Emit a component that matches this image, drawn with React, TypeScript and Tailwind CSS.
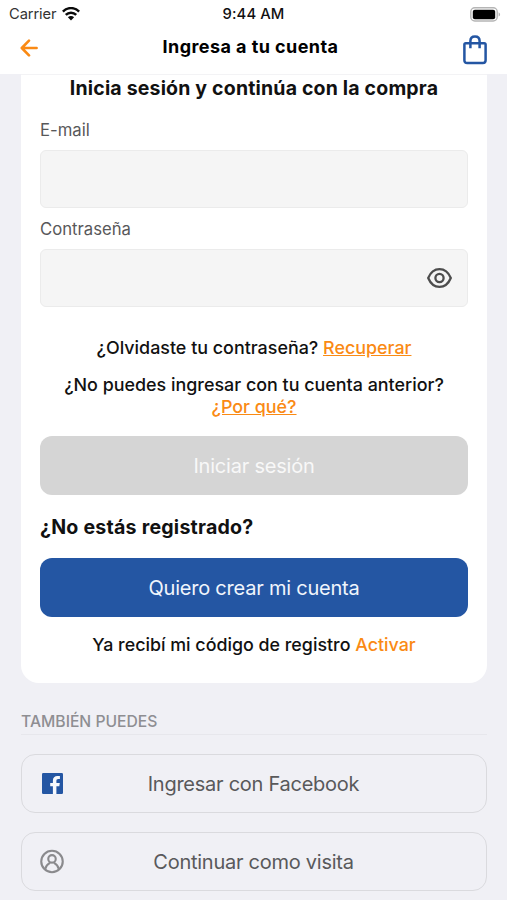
import React, { useState } from 'react';

const WifiIcon = () => (
  <svg className="h-[14px] w-[18px]" viewBox="0 0 18 14" fill="none" stroke="#0a0a0a" strokeWidth="2.5">
    <path d="M0.9 4.7C5.4 -0.1 12.6 -0.1 17.1 4.7" />
    <path d="M3.8 7.9C6.7 4.9 11.3 4.9 14.2 7.9" />
    <path d="M9 13.6L5.9 10.3C7.6 8.7 10.4 8.7 12.1 10.3Z" fill="#0a0a0a" stroke="none" />
  </svg>
);

const BatteryIcon = () => (
  <svg className="h-[15px] w-[31px]" viewBox="0 0 31 15">
    <rect x="0.8" y="0.8" width="26.4" height="13.2" rx="4" fill="#fff" stroke="#b5b5b5" strokeWidth="1.4" />
    <rect x="2.8" y="2.8" width="22.4" height="9.4" rx="2" fill="#000" />
    <path d="M28.6 5.2C30.6 6 30.6 8.8 28.6 9.6Z" fill="#b5b5b5" />
  </svg>
);

const BackIcon = () => (
  <svg className="h-[18px] w-[18px]" viewBox="0 0 18 18" fill="none" stroke="#fa8a14" strokeWidth="2.6">
    <path d="M9 1.6L1.8 9L9 16.4M2 9H16.6" strokeLinecap="round" strokeLinejoin="round" />
  </svg>
);

const BagIcon = () => (
  <svg className="h-[30px] w-[24px]" viewBox="0 0 24 30" fill="none" stroke="#2456a3" strokeWidth="2.5">
    <path d="M2.8 8.2H21.2C22.1 8.2 22.6 8.7 22.6 9.6V25.2C22.6 27 21.6 28 19.8 28H4.2C2.4 28 1.4 27 1.4 25.2V9.6C1.4 8.7 1.9 8.2 2.8 8.2Z" />
    <path d="M7.4 13.2V6.1C7.4 3.3 9.3 1.5 12 1.5C14.7 1.5 16.6 3.3 16.6 6.1V13.2" />
  </svg>
);

const EyeIcon = () => (
  <svg className="h-[20px] w-[25px]" viewBox="0 0 25 20" fill="none" stroke="#4d4d4d" strokeWidth="2.3">
    <path d="M1.2 10C6.1 -1.8 18.9 -1.8 23.8 10C18.9 21.8 6.1 21.8 1.2 10Z" strokeLinejoin="round" />
    <circle cx="12.5" cy="10" r="4.1" />
  </svg>
);

const FacebookIcon = () => (
  <svg className="h-[21px] w-[21px]" viewBox="0 0 21 21">
    <rect width="21" height="21" rx="1.2" fill="#2456a3" />
    <path
      d="M10.9 21V13.2H8.2V9.9H10.9V7.6C10.9 4.6 12.7 3 15.4 3H17.9V6.1H16.3C14.9 6.1 14.4 6.8 14.4 8V9.9H17.8L17.3 13.2H14.4V21Z"
      fill="#f7f9fc"
    />
  </svg>
);

const UserIcon = () => (
  <svg className="h-[25px] w-[25px]" viewBox="0 0 25 25" fill="none" stroke="#8a8a8d" strokeWidth="2.2">
    <circle cx="12.5" cy="12.5" r="11.2" />
    <circle cx="12.5" cy="9.8" r="3.9" />
    <path d="M5.4 20.3C6.2 16.8 8.2 15 10.6 13.6M14.4 13.6C16.8 15 18.8 16.8 19.6 20.3" />
  </svg>
);

interface OptionProps {
  icon: React.ReactNode;
  label: string;
}

const Option = ({ icon, label }: OptionProps) => (
  <button className="grid h-[59px] w-full grid-cols-[24px_1fr_24px] items-center rounded-[14px] border-[1.5px] border-[#dadade] px-[18px] text-[#59595b]">
    <span className="flex justify-center">{icon}</span>
    <span className="pr-px text-center text-[20px] tracking-[-0.26px]">{label}</span>
  </button>
);

const App = () => {
  const [email, setEmail] = useState('');
  const [password, setPassword] = useState('');
  const [visible, setVisible] = useState(false);

  return (
    <div className="h-[900px] w-full overflow-hidden bg-[#f0f0f5] font-['Inter','Liberation_Sans',sans-serif] text-[#111]">
      <header className="h-[74px] bg-white">
        {/* Status bar */}
        <div className="grid h-[28px] grid-cols-3 items-center px-[6px]">
          <div className="flex items-center gap-[6px] pl-[3px] text-[#333]">
            <span className="text-[14.7px] tracking-[-0.1px]">Carrier</span>
            <WifiIcon />
          </div>
          <span className="text-center text-[14.8px] font-medium tracking-[0.1px]">9:44 AM</span>
          <div className="flex justify-end">
            <BatteryIcon />
          </div>
        </div>

        <div className="grid h-[46px] grid-cols-[40px_1fr_40px] items-center px-[20px]">
          <button className="pb-[7px]" aria-label="Volver">
            <BackIcon />
          </button>
          <h1 className="pr-[6px] pb-[10px] text-center text-[18px] font-bold tracking-[0.43px] text-black">
            Ingresa a tu cuenta
          </h1>
          <button className="flex justify-end pb-[3px]" aria-label="Bolsa">
            <BagIcon />
          </button>
        </div>
      </header>

      <main className="pr-[20px] pl-[21px]">
        <section className="h-[609px] rounded-b-[18px] border-t border-[#f3f3f5] bg-white px-[19px]">
          <h2 className="h-[41px] whitespace-nowrap text-center text-[19.5px] leading-[27px] font-bold tracking-[0.18px]">
            Inicia sesión y continúa con la compra
          </h2>

          <label className="block h-[34px] text-[16.7px] leading-[28px] text-[#58585a]" htmlFor="email">
            E-mail
          </label>
          <input
            id="email"
            className="block h-[58px] w-full rounded-[6px] border-[1.5px] border-[#ebebeb] bg-[#f5f5f5] px-4 outline-none"
            value={email}
            onChange={(e) => setEmail(e.target.value)}
          />

          <label className="block h-[41px] pt-[7px] text-[16.7px] leading-[28px] text-[#58585a]" htmlFor="password">
            Contraseña
          </label>
          <div className="flex h-[58px] items-center rounded-[6px] border-[1.5px] border-[#ebebeb] bg-[#f5f5f5] pr-[15px] pl-4">
            <input
              id="password"
              type={visible ? 'text' : 'password'}
              className="min-w-0 flex-1 outline-none"
              value={password}
              onChange={(e) => setPassword(e.target.value)}
            />
            <button onClick={() => setVisible(!visible)} aria-label="Mostrar contraseña">
              <EyeIcon />
            </button>
          </div>

          <p className="mt-[30px] text-center text-[17.9px] leading-[22px] font-medium whitespace-nowrap">
            ¿Olvidaste tu contraseña? <a className="text-[#fa8a14] underline">Recuperar</a>
          </p>
          <p className="mt-[15px] text-center text-[17.9px] leading-[22px] font-medium whitespace-nowrap">
            ¿No puedes ingresar con tu cuenta anterior?
            <br />
            <a className="text-[#fa8a14] underline">¿Por qué?</a>
          </p>

          <button
            className="mt-[18px] h-[59px] w-full rounded-[12px] bg-[#d5d5d5] pt-px text-[20px] tracking-[-0.22px] text-[#f8f8f8]"
            disabled
          >
            Iniciar sesión
          </button>

          <h2 className="mt-[18px] h-[45px] text-[19.6px] leading-[28px] font-bold tracking-[0.22px]">
            ¿No estás registrado?
          </h2>
          <button className="block h-[59px] w-full rounded-[12px] bg-[#2456a3] text-[20px] tracking-[-0.22px] text-[#f0f5fc]">
            Quiero crear mi cuenta
          </button>
          <p className="mt-[17px] text-center text-[17.85px] leading-[22px] font-medium whitespace-nowrap">
            Ya recibí mi código de registro <a className="text-[#fa8a14]">Activar</a>
          </p>
        </section>

        <h3 className="mt-[27px] h-[25px] border-b border-[#e7e7ec] text-[15.7px] leading-[24px] font-medium text-[#8e8e92]">
          TAMBIÉN PUEDES
        </h3>
        <div className="mt-[19px] flex flex-col gap-[19px]">
          <Option icon={<FacebookIcon />} label="Ingresar con Facebook" />
          <Option icon={<UserIcon />} label="Continuar como visita" />
        </div>
      </main>
    </div>
  );
};

export default App;
